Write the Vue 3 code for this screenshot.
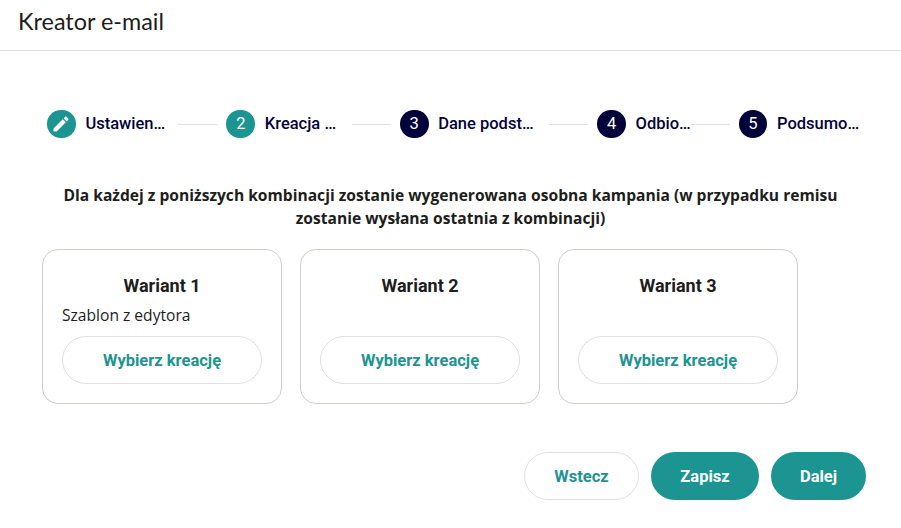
<script setup>
const steps = [
  { n: 1, label: 'Ustawienia kampanii', w: 81, done: true, active: true },
  { n: 2, label: 'Kreacja wiadomości', w: 73, active: true },
  { n: 3, label: 'Dane podstawowe', w: 98 },
  { n: 4, label: 'Odbiorcy kampanii', w: 56 },
  { n: 5, label: 'Podsumowanie', w: 83 }
]
const cards = [
  { title: 'Wariant 1', text: 'Szablon z edytora' },
  { title: 'Wariant 2', text: '' },
  { title: 'Wariant 3', text: '' }
]
</script>

<template>
  <div class="page">
    <header class="head">Kreator e-mail</header>

    <nav class="stepper">
      <template v-for="(s, i) in steps" :key="s.n">
        <div class="line" :class="'line' + i" v-if="i > 0"></div>
        <div class="step">
          <span class="dot" :class="{ teal: s.active }">
            <svg v-if="s.done" width="20" height="20" viewBox="0 0 24 24" fill="#fff">
              <path d="M3 17.25V21h3.75L17.81 9.94l-3.75-3.75L3 17.25zM20.71 7.04a1 1 0 0 0 0-1.41l-2.34-2.34a1 1 0 0 0-1.41 0l-1.83 1.83 3.75 3.75 1.83-1.83z" />
            </svg>
            <template v-else>{{ s.n }}</template>
          </span>
          <span class="label" :style="{ width: s.w + 'px' }">{{ s.label }}</span>
        </div>
      </template>
    </nav>

    <p class="info">
      Dla każdej z poniższych kombinacji zostanie wygenerowana osobna kampania (w przypadku remisu<br />
      zostanie wysłana ostatnia z kombinacji)
    </p>

    <section class="cards">
      <article class="card" v-for="c in cards" :key="c.title">
        <h3 class="card-title">{{ c.title }}</h3>
        <div class="card-text">{{ c.text }}</div>
        <button class="btn outline full">Wybierz kreację</button>
      </article>
    </section>

    <footer class="actions">
      <button class="btn outline back">Wstecz</button>
      <button class="btn solid save">Zapisz</button>
      <button class="btn solid next">Dalej</button>
    </footer>
  </div>
</template>

<style>
html, body { margin: 0; background: #fff; }
</style>

<style scoped>
.page {
  width: 901px;
  height: 528px;
  overflow: hidden;
  background: #fff;
  color: #1d1d1b;
  font-family: "Open Sans", sans-serif;
}
.head {
  box-sizing: border-box;
  height: 51px;
  padding: 8px 18px 0;
  border-bottom: 1px solid #e0e0e0;
  font-family: Lato, sans-serif;
  font-size: 23.4px;
  line-height: 26px;
  color: #1d1d1b;
}
.stepper {
  display: flex;
  align-items: center;
  height: 30px;
  margin: 58px 0 0 47px;
}
.step {
  display: flex;
  align-items: center;
  gap: 9.6px;
  flex: none;
}
.dot {
  width: 28.8px;
  height: 28.8px;
  border-radius: 50%;
  display: flex;
  align-items: center;
  justify-content: center;
  background: #02023a;
  color: #fff;
  font-family: Roboto, sans-serif;
  font-size: 16.5px;
  flex: none;
}
.dot.teal { background: #1c9491; }
.label {
  font-family: Roboto, sans-serif;
  font-weight: 500;
  font-size: 16.5px;
  line-height: 20px;
  color: #02023a;
  white-space: nowrap;
  overflow: hidden;
  text-overflow: ellipsis;
}
.line {
  flex: none;
  width: 39px;
  height: 1px;
  background: #e0e0e0;
  margin: 0 9px 0 12px;
}
.line2 { margin-left: 14px; }
.line3 { margin-left: 13px; }
.line4 { margin-left: -1px; }
.info {
  margin: 45px 0 0;
  text-align: center;
  font-weight: 700;
  font-size: 15.6px;
  line-height: 23px;
  color: #1d1d1b;
}
.cards {
  display: flex;
  gap: 18px;
  margin: 19px 0 0 42px;
}
.card {
  box-sizing: border-box;
  width: 240px;
  height: 155px;
  padding: 0 19px;
  border: 1px solid #cfcfca;
  border-radius: 16px;
  display: flex;
  flex-direction: column;
}
.card-title {
  margin: 25px 0 0;
  text-align: center;
  font-family: Roboto, sans-serif;
  font-weight: 700;
  font-size: 18px;
  line-height: 22px;
}
.card-text {
  height: 22px;
  margin-top: 8px;
  font-size: 15.6px;
  line-height: 20px;
}
.btn {
  box-sizing: border-box;
  height: 48px;
  border-radius: 24px;
  font-family: Roboto, sans-serif;
  font-weight: 700;
  font-size: 16.5px;
  padding: 0;
  cursor: pointer;
}
.outline {
  background: #fff;
  border: 1px solid #e0e0e0;
  color: #1c9491;
}
.solid {
  background: #1c9491;
  border: 0;
  color: #fff;
}
.full { width: 200px; margin-top: 9px; }
.actions {
  display: flex;
  gap: 12px;
  justify-content: flex-end;
  margin: 48px 35px 0 0;
}
.back { width: 115px; }
.save { width: 108px; }
.next { width: 95px; }
</style>
